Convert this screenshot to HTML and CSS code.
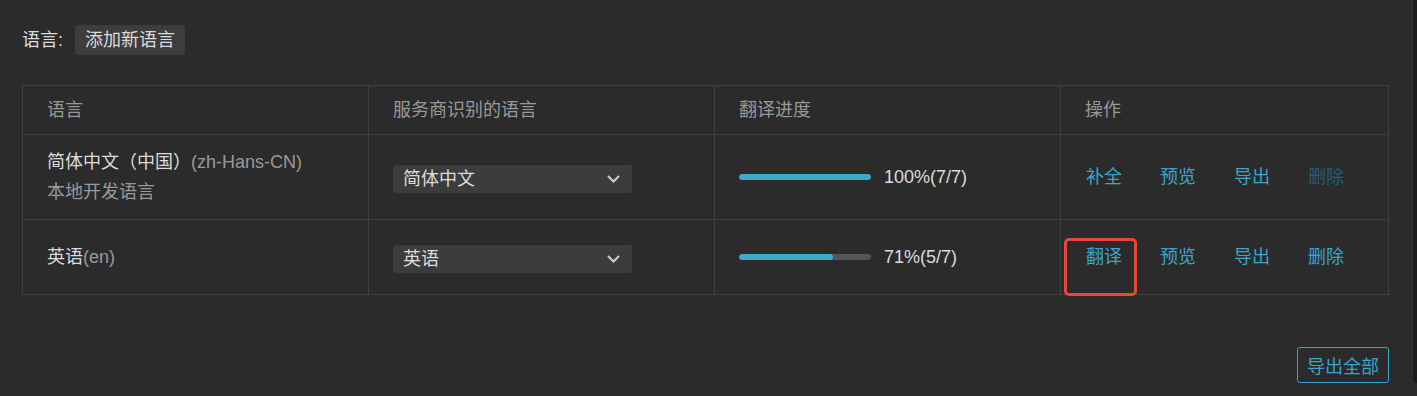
FILE: index.html
```html
<!DOCTYPE html>
<html lang="zh-CN">
<head>
    <meta charset="UTF-8">
    <meta name="viewport" content="width=device-width, initial-scale=1.0">
    <title>语言</title>
    <link rel="stylesheet" href="styles.css">
</head>
<body>
    <div class="page">
        <div class="toolbar">
            <span class="toolbar-label">语言:</span>
            <button class="btn-add" type="button">添加新语言</button>
        </div>

        <table class="lang-table">
            <colgroup>
                <col class="col-lang">
                <col class="col-provider">
                <col class="col-progress">
                <col>
            </colgroup>
            <thead>
                <tr>
                    <th>语言</th>
                    <th>服务商识别的语言</th>
                    <th>翻译进度</th>
                    <th>操作</th>
                </tr>
            </thead>
            <tbody>
                <tr class="row-main">
                    <td>
                        <div class="lang-name">简体中文（中国）<span class="lang-code">(zh-Hans-CN)</span></div>
                        <div class="lang-note">本地开发语言</div>
                    </td>
                    <td>
                        <div class="select">
                            <span>简体中文</span>
                            <svg class="chevron" width="13" height="8" viewBox="0 0 13 8"><polyline points="1,1 6.5,6.5 12,1" fill="none" stroke="#d0d0d0" stroke-width="2"/></svg>
                        </div>
                    </td>
                    <td>
                        <div class="progress">
                            <div class="progress-track"><div class="progress-fill" style="width: 100%"></div></div>
                            <span class="progress-text">100%(7/7)</span>
                        </div>
                    </td>
                    <td>
                        <div class="actions">
                            <a href="#">补全</a>
                            <a href="#">预览</a>
                            <a href="#">导出</a>
                            <a href="#" class="disabled">删除</a>
                        </div>
                    </td>
                </tr>
                <tr class="row-other">
                    <td>
                        <div class="lang-name">英语<span class="lang-code">(en)</span></div>
                    </td>
                    <td>
                        <div class="select">
                            <span>英语</span>
                            <svg class="chevron" width="13" height="8" viewBox="0 0 13 8"><polyline points="1,1 6.5,6.5 12,1" fill="none" stroke="#d0d0d0" stroke-width="2"/></svg>
                        </div>
                    </td>
                    <td>
                        <div class="progress">
                            <div class="progress-track"><div class="progress-fill" style="width: 71%"></div></div>
                            <span class="progress-text">71%(5/7)</span>
                        </div>
                    </td>
                    <td>
                        <div class="actions">
                            <a href="#" class="marked">翻译</a>
                            <a href="#">预览</a>
                            <a href="#">导出</a>
                            <a href="#">删除</a>
                        </div>
                    </td>
                </tr>
            </tbody>
        </table>

        <div class="footer">
            <button class="btn-export" type="button">导出全部</button>
        </div>
    </div>
</body>
</html>
```

FILE: styles.css
```css
body {
    margin: 0;
    background-color: #2b2b2b;
    border-right: 4px solid #1b1b1b;
    font-family: 'Liberation Sans', 'Noto Sans CJK SC', sans-serif;
    font-size: 18px;
    color: #dcdcdc;
    overflow: hidden;
}
.page {
    padding: 25px 24px 0 22px;
}
.toolbar {
    display: flex;
    align-items: center;
    gap: 12px;
    height: 30px;
}
.toolbar-label {
    line-height: 30px;
}
button {
    font-family: inherit;
    font-size: 18px;
    cursor: pointer;
}
.btn-add {
    height: 30px;
    padding: 0 10px;
    border: none;
    border-radius: 3px;
    background-color: #3d3d3d;
    color: #dcdcdc;
    line-height: 30px;
}
.lang-table {
    width: 100%;
    margin-top: 30px;
    border-collapse: collapse;
    table-layout: fixed;
    border: 1px solid #404040;
}
.col-lang, .col-provider, .col-progress {
    width: 346px;
}
.lang-table th, .lang-table td {
    border: 1px solid #404040;
    padding: 0 24px;
    text-align: left;
    vertical-align: middle;
    line-height: 30px;
}
.lang-table th {
    height: 48px;
    font-weight: normal;
    color: #999;
}
.row-main td {
    height: 84px;
}
.row-other td {
    height: 74px;
}
.lang-code, .lang-note {
    color: #999;
}
.select {
    display: flex;
    align-items: center;
    justify-content: space-between;
    width: 239px;
    height: 28px;
    margin-top: 4px;
    padding: 0 12px 0 10px;
    box-sizing: border-box;
    border-radius: 3px;
    background-color: #3c3c3c;
    color: #dcdcdc;
}
.progress {
    display: flex;
    align-items: center;
    gap: 13px;
}
.progress-track {
    width: 132px;
    height: 6px;
    border-radius: 3px;
    background-color: #555;
    overflow: hidden;
}
.progress-fill {
    height: 100%;
    border-radius: 3px;
    background-color: #3ea8cd;
}
.actions {
    display: flex;
    gap: 38px;
    padding-left: 1px;
}
.actions a {
    position: relative;
    color: #3aa5cf;
    text-decoration: none;
}
.actions a.disabled {
    color: #255d73;
    cursor: default;
}
/* 标注框 */
.actions a.marked::after {
    content: "";
    position: absolute;
    top: -4px;
    bottom: -24px;
    left: -22px;
    right: -15px;
    border: 3px solid #e5473b;
    border-radius: 5px;
}
.footer {
    display: flex;
    justify-content: flex-end;
    margin-top: 52px;
}
.btn-export {
    height: 36px;
    padding: 0 9px;
    border: 1px solid #3aa5cf;
    border-radius: 3px;
    background: transparent;
    color: #3aa5cf;
}
```
